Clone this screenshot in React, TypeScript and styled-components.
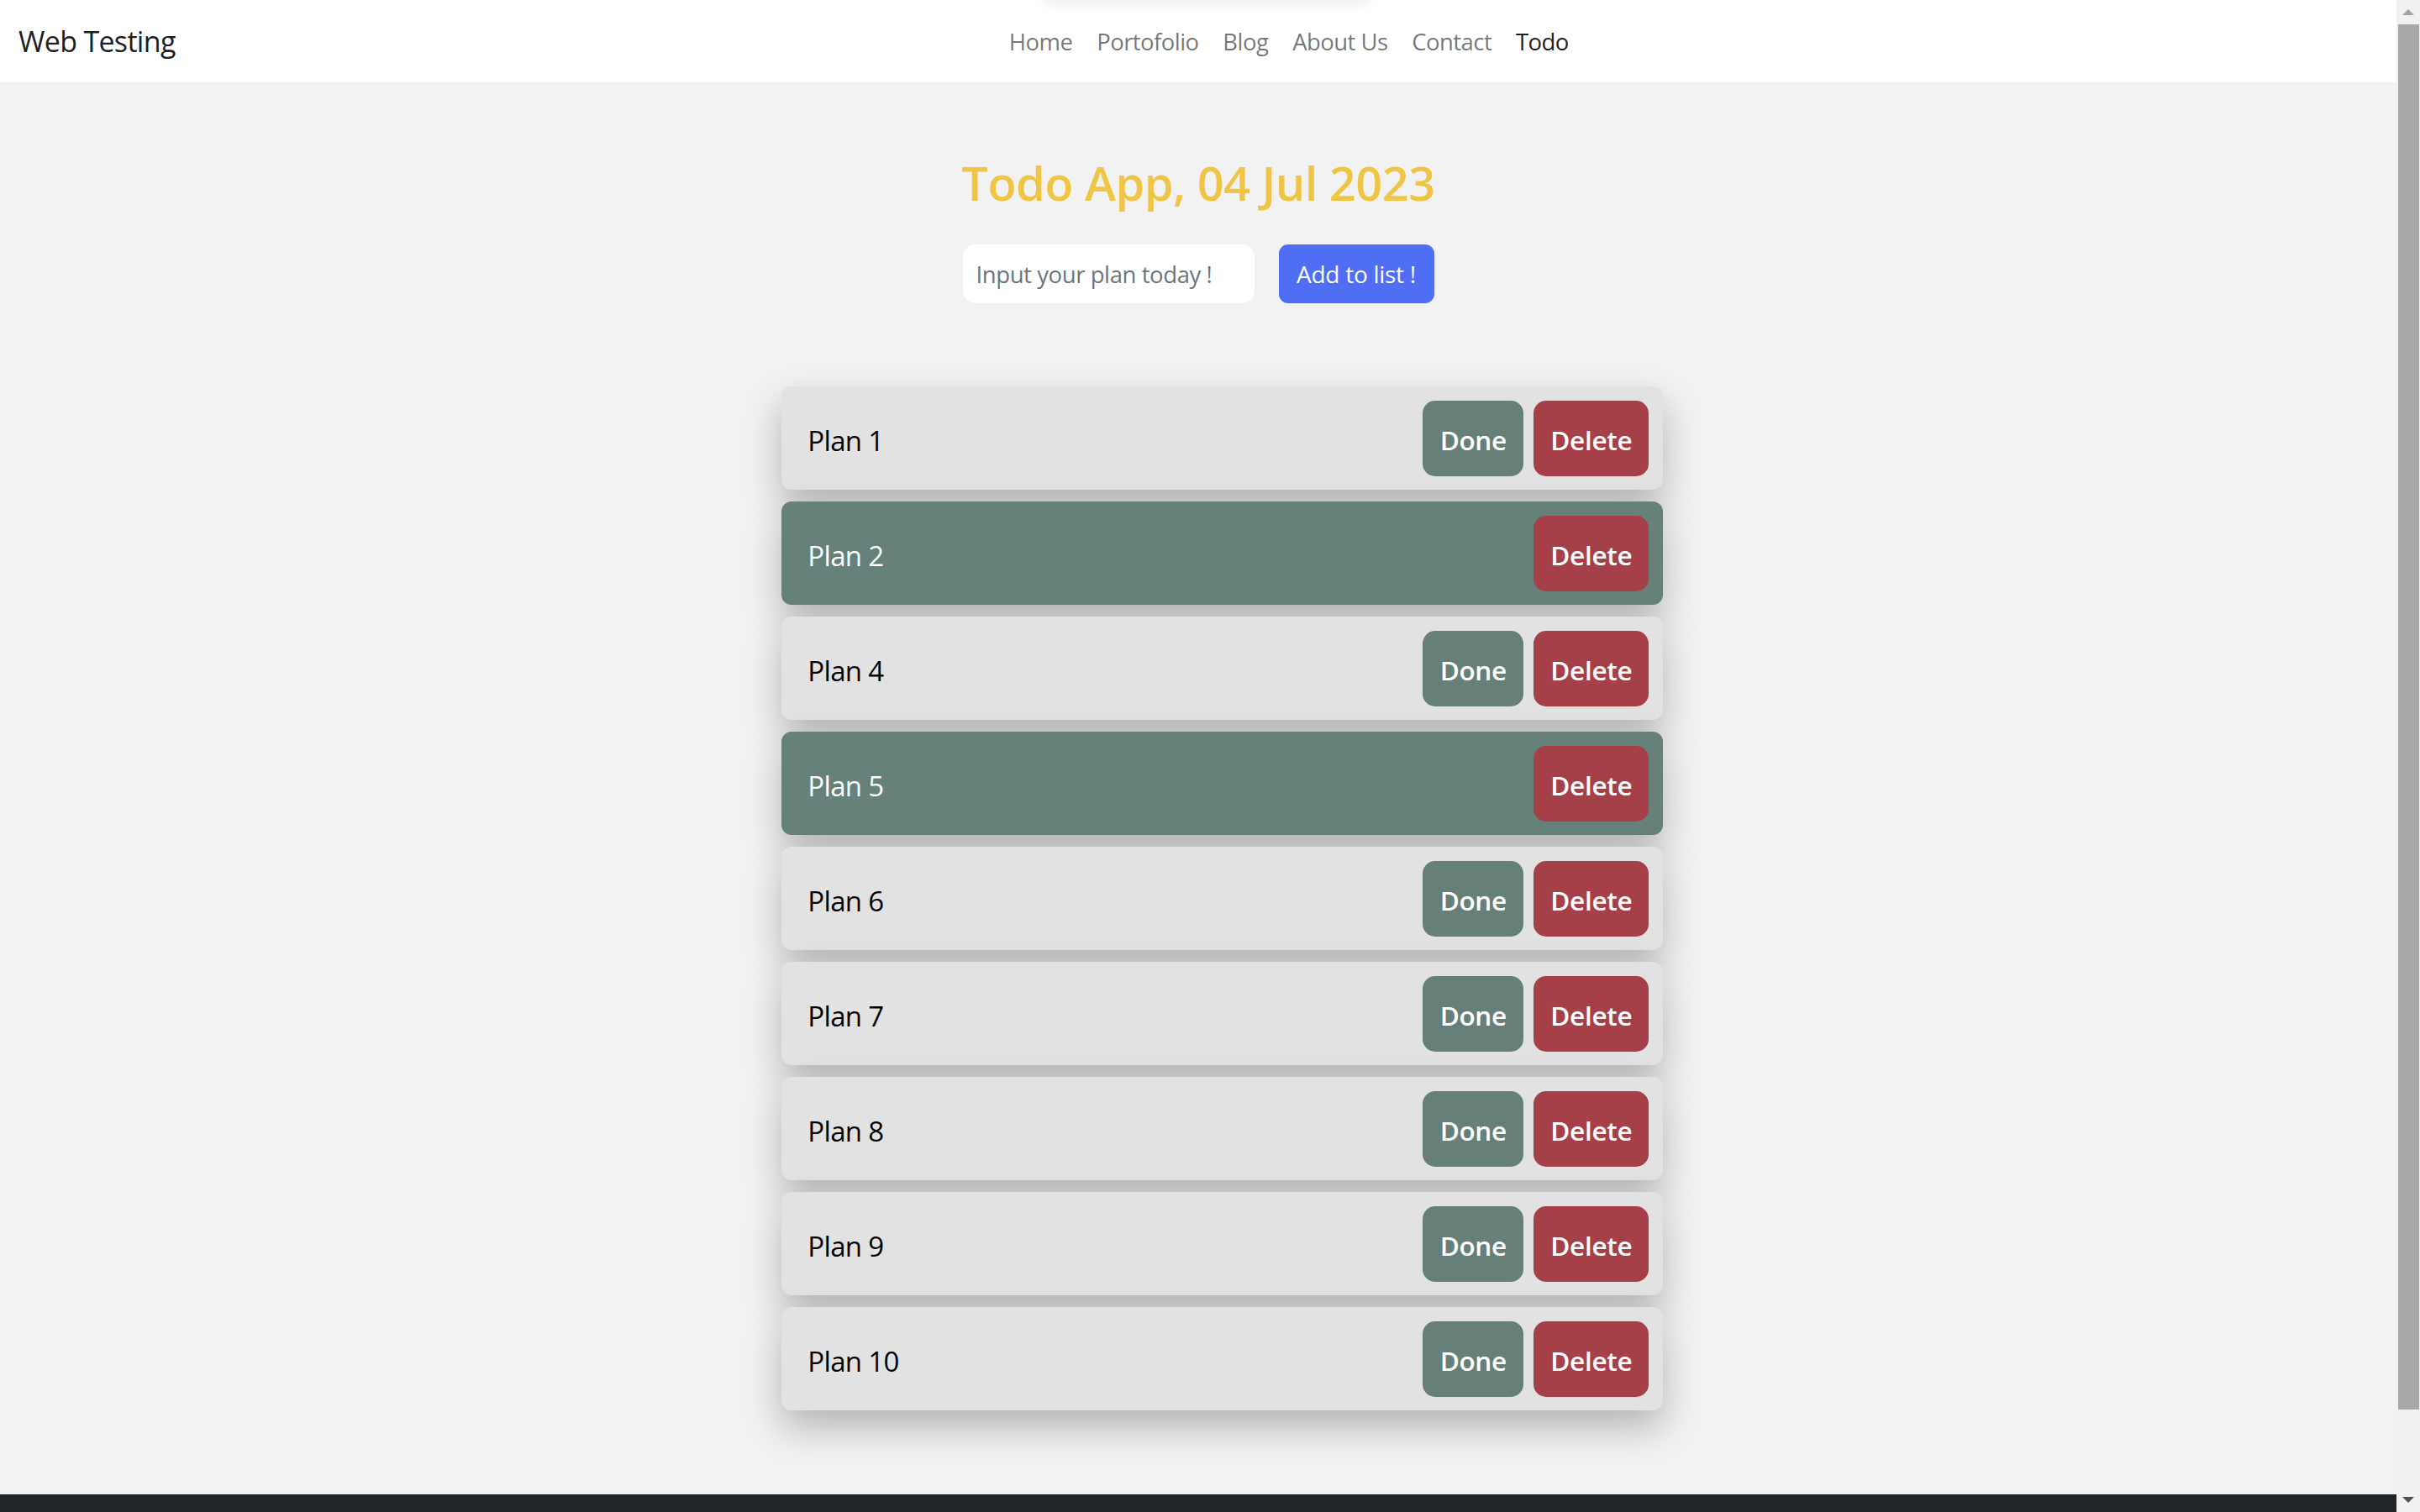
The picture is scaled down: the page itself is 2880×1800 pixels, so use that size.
import React from "react";
import styled, { createGlobalStyle, css } from "styled-components";

const GlobalStyle = createGlobalStyle`
  html, body {
    margin: 0;
    padding: 0;
    height: 1800px;
    overflow: hidden;
  }
  body {
    font-family: "Open Sans", "Noto Sans", sans-serif;
    color: #212529;
  }
  * { box-sizing: border-box; }
`;

const Screen = styled.div`
  display: flex;
  width: 100vw;
  height: 1800px;
`;

const Page = styled.div`
  flex: 1;
  display: flex;
  flex-direction: column;
  background: #f2f2f2;
  overflow: hidden;
  position: relative;
`;

const NavBar = styled.nav`
  height: 98px;
  flex: none;
  background: #ffffff;
  display: flex;
  align-items: center;
  padding: 0 22px;
  position: relative;
`;

const TopGlow = styled.div`
  position: absolute;
  top: -40px;
  left: 1236px;
  width: 400px;
  height: 40px;
  border-radius: 20px;
  box-shadow: 0 4px 18px rgba(0, 0, 0, 0.08);
`;

const Brand = styled.a`
  font-size: 34px;
  letter-spacing: -0.02em;
  color: rgba(0, 0, 0, 0.9);
  margin-right: 29px;
  text-decoration: none;
  white-space: nowrap;
`;

const NavList = styled.ul`
  display: flex;
  list-style: none;
  margin: 0 auto;
  padding: 0;
`;

const NavLink = styled.a<{ $active?: boolean }>`
  display: block;
  padding: 0 14.4px;
  font-size: 27.5px;
  letter-spacing: -0.02em;
  text-decoration: none;
  color: ${(p) => (p.$active ? "rgba(0,0,0,0.9)" : "rgba(0,0,0,0.55)")};
`;

const Main = styled.main`
  flex: 1;
  display: flex;
  flex-direction: column;
  align-items: center;
`;

const Title = styled.h2`
  margin: 85px 0 0;
  font-size: 56px;
  letter-spacing: -0.01em;
  line-height: 69px;
  font-weight: 600;
  color: #f0c545;
`;

const AddForm = styled.form`
  display: flex;
  gap: 29px;
  margin-top: 39px;
`;

const PlanInput = styled.input`
  width: 347px;
  height: 70px;
  border: none;
  border-radius: 15px;
  background: #ffffff;
  padding: 0 16px;
  font-family: inherit;
  font-size: 27.5px;
  letter-spacing: -0.015em;
  color: #212529;
  outline: none;
  &::placeholder {
    color: #6c757d;
  }
`;

const AddButton = styled.button`
  height: 70px;
  width: 185px;
  border: none;
  border-radius: 11px;
  background: #506ef4;
  color: #ffffff;
  font-family: inherit;
  font-size: 28px;
  letter-spacing: -0.01em;
  padding: 0;
`;

const TodoList = styled.ul`
  list-style: none;
  margin: 99px 0 0;
  padding: 0 0 0 57.6px;
  width: ${1049 + 57.6}px;
  display: flex;
  flex-direction: column;
  gap: 14px;
`;

const TodoRow = styled.li<{ $done?: boolean }>`
  height: 123px;
  display: flex;
  align-items: center;
  justify-content: space-between;
  padding: 0 17px 0 31px;
  border-radius: 12px;
  background: ${(p) => (p.$done ? "#66807a" : "#e2e2e2")};
  color: ${(p) => (p.$done ? "#ffffff" : "#000000")};
  box-shadow: 0 20px 45px rgba(0, 0, 0, 0.26);
`;

const PlanLabel = styled.span`
  font-size: 33px;
  letter-spacing: -0.02em;
  padding-top: 5px;
`;

const Actions = styled.div`
  display: flex;
  gap: 12px;
`;

const ActionButton = styled.button<{ $kind: "done" | "delete" }>`
  height: 90px;
  border: none;
  border-radius: 15px;
  padding: 3px 20px 0;
  font-family: inherit;
  font-size: 31.5px;
  letter-spacing: -0.01em;
  font-weight: 600;
  color: #ffffff;
  ${(p) =>
    p.$kind === "done"
      ? css`
          background: #667f79;
          min-width: 120px;
        `
      : css`
          background: #a53f48;
          min-width: 137px;
        `}
`;

const Footer = styled.footer`
  height: 22px;
  flex: none;
  background: #212529;
  margin-top: 100px;
`;

const Scrollbar = styled.div`
  width: 28px;
  flex: none;
  background: #f1f1f1;
  display: flex;
  flex-direction: column;
`;

const ArrowCell = styled.div`
  height: 29px;
  flex: none;
  display: flex;
  align-items: center;
  justify-content: center;
`;

const Thumb = styled.div`
  height: 1649px;
  margin: 0 1px 0 2px;
  background: #a8a8a8;
  flex: none;
`;

const TrackRest = styled.div`
  flex: 1;
`;

const Arrow = ({ dir, color }: { dir: "up" | "down"; color: string }) => (
  <svg width="14" height="8" viewBox="0 0 14 8">
    {dir === "up" ? (
      <polygon points="7,0 14,7 0,7" fill={color} />
    ) : (
      <polygon points="0,0 14,0 7,7" fill={color} />
    )}
  </svg>
);

const navItems = ["Home", "Portofolio", "Blog", "About Us", "Contact", "Todo"];

const todos = [
  { name: "Plan 1", done: false },
  { name: "Plan 2", done: true },
  { name: "Plan 4", done: false },
  { name: "Plan 5", done: true },
  { name: "Plan 6", done: false },
  { name: "Plan 7", done: false },
  { name: "Plan 8", done: false },
  { name: "Plan 9", done: false },
  { name: "Plan 10", done: false },
];

export default function App() {
  return (
    <>
      <GlobalStyle />
      <Screen>
        <Page>
          <NavBar>
            <TopGlow />
            <Brand href="#">Web Testing</Brand>
            <NavList>
              {navItems.map((item) => (
                <li key={item}>
                  <NavLink href="#" $active={item === "Todo"}>
                    {item}
                  </NavLink>
                </li>
              ))}
            </NavList>
          </NavBar>
          <Main>
            <Title>Todo App, 04 Jul 2023</Title>
            <AddForm onSubmit={(e) => e.preventDefault()}>
              <PlanInput placeholder="Input your plan today !" />
              <AddButton type="submit">Add to list !</AddButton>
            </AddForm>
            <TodoList>
              {todos.map((t) => (
                <TodoRow key={t.name} $done={t.done}>
                  <PlanLabel>{t.name}</PlanLabel>
                  <Actions>
                    {!t.done && <ActionButton $kind="done">Done</ActionButton>}
                    <ActionButton $kind="delete">Delete</ActionButton>
                  </Actions>
                </TodoRow>
              ))}
            </TodoList>
          </Main>
          <Footer />
        </Page>
        <Scrollbar>
          <ArrowCell>
            <Arrow dir="up" color="#a3a3a3" />
          </ArrowCell>
          <Thumb />
          <TrackRest />
          <ArrowCell>
            <Arrow dir="down" color="#505050" />
          </ArrowCell>
        </Scrollbar>
      </Screen>
    </>
  );
}
